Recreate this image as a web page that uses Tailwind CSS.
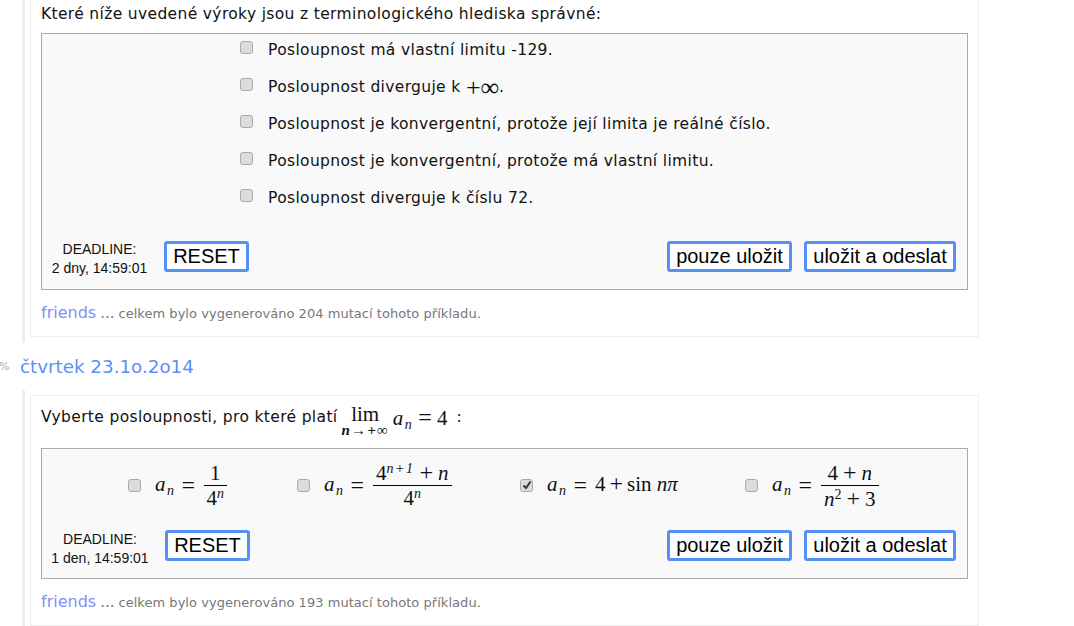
<!DOCTYPE html>
<html lang="cs">
<head>
    <meta charset="utf-8"/>
    <title>Příklady</title>
    <script src="https://cdn.jsdelivr.net/npm/@tailwindcss/browser@4"></script>
</head>
<body class="bg-white overflow-hidden h-[626px] font-['DejaVu_Sans',sans-serif] text-[#111]">
    <main class="w-[979px] -mt-[11px]">
        <!-- prvni priklad -->
        <div class="ml-[22px] border-l-[3px] border-[#eeeeee] pl-[5px] pb-[6px]">
            <section class="border border-[#eeeeee] px-[10px] pt-[14px] pb-[13px]">
                <p class="text-[15.5px] tracking-[0.35px] leading-[20px] mb-[9px]">Které níže uvedené výroky jsou z terminologického hlediska správné:</p>
                <div class="border border-[#aaaaaa] bg-[#f9f9f9] h-[257px] flex flex-col">
                    <div class="pl-[198px] -mt-[2px] h-[209px] text-[15.5px] tracking-[0.35px]">
                        <label class="flex items-center h-[37px]"><input type="checkbox" class="appearance-none w-[13px] h-[13px] rounded-[3px] bg-[#dcdcdc] border border-[#aaaaaa] mr-[15px] -mt-[6px]"/>Posloupnost má vlastní limitu -129.</label>
                        <label class="flex items-center h-[37px]"><input type="checkbox" class="appearance-none w-[13px] h-[13px] rounded-[3px] bg-[#dcdcdc] border border-[#aaaaaa] mr-[15px] -mt-[6px]"/>Posloupnost diverguje k&nbsp;<span class="font-['Liberation_Serif',serif] text-[26px] leading-none tracking-normal">+∞</span>.</label>
                        <label class="flex items-center h-[37px]"><input type="checkbox" class="appearance-none w-[13px] h-[13px] rounded-[3px] bg-[#dcdcdc] border border-[#aaaaaa] mr-[15px] -mt-[6px]"/>Posloupnost je konvergentní, protože její limita je reálné číslo.</label>
                        <label class="flex items-center h-[37px]"><input type="checkbox" class="appearance-none w-[13px] h-[13px] rounded-[3px] bg-[#dcdcdc] border border-[#aaaaaa] mr-[15px] -mt-[6px]"/>Posloupnost je konvergentní, protože má vlastní limitu.</label>
                        <label class="flex items-center h-[37px]"><input type="checkbox" class="appearance-none w-[13px] h-[13px] rounded-[3px] bg-[#dcdcdc] border border-[#aaaaaa] mr-[15px] -mt-[6px]"/>Posloupnost diverguje k číslu 72.</label>
                    </div>
                    <div class="flex items-start font-['Liberation_Sans',sans-serif]">
                        <div class="w-[115px] -mt-[1px] text-center text-[14px] leading-[19px]">DEADLINE:<br/>2 dny, 14:59:01</div>
                        <button class="ml-[7px] w-[85px] h-[31px] pb-[2px] border-[3px] border-[#5590f5] rounded-[3px] bg-white text-[20px] leading-none text-black">RESET</button>
                        <button class="ml-auto w-[125px] h-[31px] pb-[2px] border-[3px] border-[#5590f5] rounded-[3px] bg-white text-[20px] leading-none text-black">pouze uložit</button>
                        <button class="ml-[12px] mr-[11px] w-[152px] h-[31px] pb-[2px] border-[3px] border-[#5590f5] rounded-[3px] bg-white text-[20px] leading-none text-black">uložit a odeslat</button>
                    </div>
                </div>
                <p class="mt-[11px] h-[22px] flex items-baseline"><span class="text-[16px] text-[#7f8ff8]">friends</span><span class="text-[15px] text-[#777777] ml-[4px]">...</span><span class="text-[13px] tracking-[0.04px] text-[#777777] ml-[4px]">celkem bylo vygenerováno 204 mutací tohoto příkladu.</span></p>
            </section>
        </div>

        <h2 class="flex items-center h-[47px] pt-[1px]">
            <span class="w-[21px] text-[11px] text-[#aaaaaa] -ml-[1px]">%</span>
            <span class="text-[18.3px] text-[#5b8ff5]">čtvrtek 23.1o.2o14</span>
        </h2>

        <!-- druhy priklad -->
        <div class="ml-[22px] border-l-[3px] border-[#eeeeee] pl-[5px] pt-[5px]">
            <section class="border border-[#eeeeee] px-[10px] pt-[5px] pb-[13px]">
                <div class="flex items-start h-[47px] text-[15.5px] tracking-[0.35px]">
                    <span class="mt-[5px]">Vyberte posloupnosti, pro které platí</span>
                    <span class="inline-flex flex-col items-center ml-[4px] font-['Liberation_Serif',serif] mt-[3px] tracking-normal">
                        <span class="text-[21px] leading-[20px]">lim</span>
                        <span class="text-[15px] leading-[12px] italic font-bold tracking-[1.2px]">n→+∞</span>
                    </span>
                    <span class="flex items-baseline font-['Liberation_Serif',serif] text-[21px] ml-[4px] mt-[2px] tracking-normal"><i class="tracking-[1.5px]">a<sub class="text-[14px]">n</sub></i><span class="mx-[5px] text-[24px] leading-none">=</span>4</span>
                    <span class="mt-[5px] ml-[9px]">:</span>
                </div>
                <div class="border border-[#aaaaaa] bg-[#f9f9f9] h-[131px] flex flex-col">
                    <div class="h-[81px] pb-[9px] pl-[86px] flex items-center font-['Liberation_Serif',serif] text-[21px]">
                        <div class="w-[169px] flex items-center">
                            <input type="checkbox" class="appearance-none w-[13px] h-[13px] rounded-[3px] bg-[#dcdcdc] border border-[#aaaaaa] mr-[14px]"/>
                            <i class="tracking-[1.5px]">a<sub class="text-[14px]">n</sub></i><span class="ml-[6px] mr-[9px] text-[24px] leading-none">=</span>
                            <span class="inline-flex flex-col items-center"><span class="px-[6px] border-b border-black leading-[24px]">1</span><span class="leading-[24px]">4<sup class="text-[14px] italic">n</sup></span></span>
                        </div>
                        <div class="w-[223px] flex items-center">
                            <input type="checkbox" class="appearance-none w-[13px] h-[13px] rounded-[3px] bg-[#dcdcdc] border border-[#aaaaaa] mr-[14px]"/>
                            <i class="tracking-[1.5px]">a<sub class="text-[14px]">n</sub></i><span class="ml-[6px] mr-[9px] text-[24px] leading-none">=</span>
                            <span class="inline-flex flex-col items-center"><span class="px-[3px] border-b border-black leading-[24px]">4<sup class="text-[14px] italic tracking-[1.5px]">n+1</sup><span class="mx-[5px] text-[24px] leading-none">+</span><i>n</i></span><span class="leading-[24px]">4<sup class="text-[14px] italic">n</sup></span></span>
                        </div>
                        <div class="w-[225px] flex items-center">
                            <span class="relative w-[13px] h-[13px] mr-[14px]">
                                <input type="checkbox" class="appearance-none block w-[13px] h-[13px] rounded-[3px] bg-[#dcdcdc] border border-[#aaaaaa]"/>
                                <svg class="absolute left-[2px] top-[1px] w-[10px] h-[10px]" viewBox="0 0 10 10"><path d="M1.5 5.5 L4 8 L8.5 1.5" fill="none" stroke="#333" stroke-width="2"/></svg>
                            </span>
                            <i class="tracking-[1.5px]">a<sub class="text-[14px]">n</sub></i><span class="ml-[6px] mr-[8px] text-[24px] leading-none">=</span><span>4<span class="mx-[4px] text-[24px] leading-none">+</span>sin <i>nπ</i></span>
                        </div>
                        <div class="flex items-center">
                            <input type="checkbox" class="appearance-none w-[13px] h-[13px] rounded-[3px] bg-[#dcdcdc] border border-[#aaaaaa] mr-[14px]"/>
                            <i class="tracking-[1.5px]">a<sub class="text-[14px]">n</sub></i><span class="ml-[6px] mr-[9px] text-[24px] leading-none">=</span>
                            <span class="inline-flex flex-col items-center"><span class="border-b border-black leading-[24px] w-full text-center">4<span class="mx-[5px] text-[24px] leading-none">+</span><i>n</i></span><span class="px-[3px] leading-[24px]"><i>n</i><sup class="text-[14px]">2</sup><span class="mx-[5px] text-[24px] leading-none">+</span>3</span></span>
                        </div>
                    </div>
                    <div class="flex items-start font-['Liberation_Sans',sans-serif]">
                        <div class="w-[116px] text-center text-[14px] leading-[19px]">DEADLINE:<br/>1 den, 14:59:01</div>
                        <button class="ml-[7px] w-[85px] h-[31px] pb-[2px] border-[3px] border-[#5590f5] rounded-[3px] bg-white text-[20px] leading-none text-black">RESET</button>
                        <button class="ml-auto w-[125px] h-[31px] pb-[2px] border-[3px] border-[#5590f5] rounded-[3px] bg-white text-[20px] leading-none text-black">pouze uložit</button>
                        <button class="ml-[12px] mr-[11px] w-[152px] h-[31px] pb-[2px] border-[3px] border-[#5590f5] rounded-[3px] bg-white text-[20px] leading-none text-black">uložit a odeslat</button>
                    </div>
                </div>
                <p class="mt-[11px] h-[22px] flex items-baseline"><span class="text-[16px] text-[#7f8ff8]">friends</span><span class="text-[15px] text-[#777777] ml-[4px]">...</span><span class="text-[13px] tracking-[0.04px] text-[#777777] ml-[4px]">celkem bylo vygenerováno 193 mutací tohoto příkladu.</span></p>
            </section>
        </div>
    </main>
</body>
</html>
